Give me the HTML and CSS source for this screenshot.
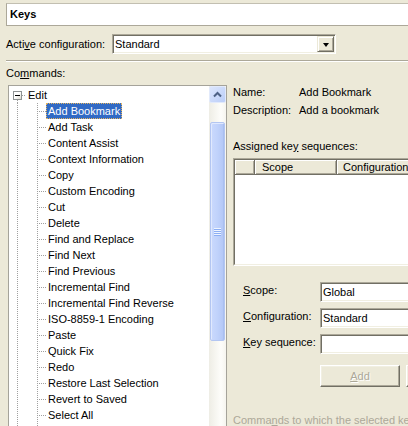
FILE: index.html
```html
<!DOCTYPE html>
<html>
<head>
<meta charset="utf-8">
<link rel="stylesheet" href="styles.css">
</head>
<body>
<div class="page">
  <div class="title">Keys</div>
  <div class="config-row">
    <span class="config-label">Acti<u>v</u>e configuration:</span>
    <div class="sunken combo combo-top">
      <span class="combo-text">Standard</span>
      <span class="drop-btn"><span class="tri"></span></span>
    </div>
  </div>
  <div class="sep"></div>
  <div class="section-label">Co<u>m</u>mands:</div>
  <div class="main">
    <div class="tree">
      <div class="tree-body">
        <div class="row root-row">
          <span class="expander"><span class="minus"></span></span>
          <span class="hline root-hline"></span>
          <span class="label">Edit</span>
        </div>
        <div class="children">
          <div class="row"><span class="hline"></span><span class="label selected">Add Bookmark</span></div>
          <div class="row"><span class="hline"></span><span class="label">Add Task</span></div>
          <div class="row"><span class="hline"></span><span class="label">Content Assist</span></div>
          <div class="row"><span class="hline"></span><span class="label">Context Information</span></div>
          <div class="row"><span class="hline"></span><span class="label">Copy</span></div>
          <div class="row"><span class="hline"></span><span class="label">Custom Encoding</span></div>
          <div class="row"><span class="hline"></span><span class="label">Cut</span></div>
          <div class="row"><span class="hline"></span><span class="label">Delete</span></div>
          <div class="row"><span class="hline"></span><span class="label">Find and Replace</span></div>
          <div class="row"><span class="hline"></span><span class="label">Find Next</span></div>
          <div class="row"><span class="hline"></span><span class="label">Find Previous</span></div>
          <div class="row"><span class="hline"></span><span class="label">Incremental Find</span></div>
          <div class="row"><span class="hline"></span><span class="label">Incremental Find Reverse</span></div>
          <div class="row"><span class="hline"></span><span class="label">ISO-8859-1 Encoding</span></div>
          <div class="row"><span class="hline"></span><span class="label">Paste</span></div>
          <div class="row"><span class="hline"></span><span class="label">Quick Fix</span></div>
          <div class="row"><span class="hline"></span><span class="label">Redo</span></div>
          <div class="row"><span class="hline"></span><span class="label">Restore Last Selection</span></div>
          <div class="row"><span class="hline"></span><span class="label">Revert to Saved</span></div>
          <div class="row"><span class="hline"></span><span class="label">Select All</span></div>
          <div class="row"><span class="hline"></span></div>
        </div>
      </div>
      <div class="vscroll">
        <div class="sb-btn">
          <svg width="15" height="15" viewBox="0 0 15 15"><polyline points="4,9.5 7.5,6 11,9.5" fill="none" stroke="#4D6185" stroke-width="2"/></svg>
        </div>
        <div class="sb-gap"></div>
        <div class="sb-thumb"><span class="grip"></span></div>
      </div>
    </div>
    <div class="details">
      <div class="info">
        <span>Name:</span><span>Add Bookmark</span>
        <span>Description:</span><span>Add a bookmark</span>
      </div>
      <div class="assigned">Assigned ke<u>y</u> sequences:</div>
      <div class="table-outer">
        <div class="table-inner">
          <div class="thead">
            <span class="th th-first"></span>
            <span class="th th-scope">Scope</span>
            <span class="th th-config">Configuration</span>
          </div>
        </div>
      </div>
      <div class="form">
        <span class="form-label"><u>S</u>cope:</span>
        <div class="sunken field"><span class="combo-text">Global</span></div>
        <span class="form-label"><u>C</u>onfiguration:</span>
        <div class="sunken field"><span class="combo-text">Standard</span></div>
        <span class="form-label"><u>K</u>ey sequence:</span>
        <div class="sunken field"></div>
      </div>
      <div class="buttons">
        <span class="btn"><span><u>A</u>dd</span></span>
        <span class="btn"></span>
      </div>
      <div class="bottom-label">Comma<u>n</u>ds to which the selected key sequence is assigned:</div>
    </div>
  </div>
</div>
</body>
</html>
```
FILE: styles.css
```css
* { box-sizing: border-box; }
html, body { margin: 0; padding: 0; }
body {
  background: #ECE9D8;
  font-family: "Liberation Sans", Arial, sans-serif;
  font-size: 11px;
  color: #000;
  width: 408px;
  height: 426px;
  overflow: hidden;
}
.page {
  width: 408px;
  height: 426px;
  overflow: hidden;
  padding-top: 3px;
}
.title {
  margin-left: 6px;
  height: 23px;
  background: #fff;
  border: 1px solid #ACA899;
  border-top-color: #C2BFB1;
  border-right: none;
  font-weight: bold;
  padding-left: 3px;
  line-height: 21px;
}
.config-row {
  display: flex;
  align-items: center;
  margin-top: 8px;
  padding-left: 6px;
  height: 20px;
}
.config-label {
  width: 106px;
  flex: none;
  white-space: nowrap;
}
.sunken {
  border: 1px solid;
  border-color: #ACA899 #FFFFFF #FFFFFF #ACA899;
  box-shadow: inset 1px 1px #716F64, inset -1px -1px #F1EFE2;
  padding: 1px;
  background: #fff;
}
.combo {
  display: flex;
  align-items: center;
}
.combo-top {
  width: 224px;
  height: 20px;
  flex: none;
}
.combo-text {
  flex: 1;
  padding-left: 1px;
  line-height: 16px;
  white-space: nowrap;
}
.drop-btn {
  width: 17px;
  height: 16px;
  flex: none;
  background: #ECE9D8;
  border: 1px solid;
  border-color: #ECE9D8 #716F64 #716F64 #ECE9D8;
  box-shadow: inset 1px 1px #fff, inset -1px -1px #ACA899;
  display: flex;
  align-items: center;
  justify-content: center;
}
.tri {
  width: 1px;
  height: 0;
  border-left: 3px solid transparent;
  border-right: 3px solid transparent;
  border-top: 4px solid #000;
  margin-top: 1px;
}
.sep {
  margin: 6px 0 0 6px;
  height: 2px;
  border-top: 1px solid #ACA899;
  border-bottom: 1px solid #fff;
}
.section-label {
  margin-top: 5px;
  padding-left: 6px;
  line-height: 13px;
}
.main {
  display: flex;
  align-items: flex-start;
  margin-top: 5px;
}
.tree {
  margin-left: 8px;
  width: 219px;
  height: 345px;
  flex: none;
  border: 1px solid #A5A39A;
  background: #fff;
  display: flex;
}
.tree-body {
  width: 200px;
  flex: none;
  overflow: hidden;
  padding-top: 1px;
}
.row {
  display: flex;
  align-items: center;
  height: 16px;
}
.root-row {
  background-image: repeating-linear-gradient(to bottom, #A0A0A0 0 1px, transparent 1px 2px);
  background-size: 1px 3px;
  background-position: 8px 13px;
  background-repeat: no-repeat;
}
.expander {
  width: 9px;
  height: 9px;
  margin-left: 4px;
  flex: none;
  border: 1px solid #8F9394;
  background: linear-gradient(135deg, #fff 45%, #DCD9CC);
  display: flex;
  align-items: center;
  justify-content: center;
}
.minus {
  width: 5px;
  height: 1px;
  background: #000;
}
.hline {
  height: 1px;
  width: 9px;
  margin-left: 28px;
  flex: none;
  background: repeating-linear-gradient(to right, #A0A0A0 0 1px, transparent 1px 2px);
}
.root-hline {
  width: 4px;
  margin-left: 0;
}
.label {
  border: 1px dotted transparent;
  padding: 0 1px;
  line-height: 14px;
  white-space: nowrap;
}
.label.selected {
  background: #316AC5;
  color: #fff;
  border-color: #E4B45E;
}
.children {
  background-image:
    repeating-linear-gradient(to bottom, #A0A0A0 0 1px, transparent 1px 2px),
    repeating-linear-gradient(to bottom, #A0A0A0 0 1px, transparent 1px 2px);
  background-size: 1px 100%, 1px 100%;
  background-position: 8px 0, 28px 0;
  background-repeat: no-repeat;
}
.vscroll {
  width: 17px;
  flex: none;
  display: flex;
  flex-direction: column;
  background: linear-gradient(to right, #EEEDE5, #FDFDFA 70%, #F6F5EF);
}
.sb-btn {
  height: 17px;
  border: 1px solid #E2EAFB;
  border-radius: 2px;
  background: linear-gradient(135deg, #DCE6FD, #BBCEF8);
  display: flex;
  align-items: center;
  justify-content: center;
}
.sb-gap {
  height: 19px;
}
.sb-thumb {
  height: 219px;
  margin: 0 1px 0 1px;
  border: 1px solid #B3C6F2;
  border-radius: 2px;
  background: linear-gradient(to right, #CAD9FD, #C0D2FB 50%, #B2C6F6);
  box-shadow: inset 1px 1px #E0E9FE, inset -1px 0 #A9BFF0;
  display: flex;
  align-items: center;
  justify-content: center;
}
.grip {
  width: 7px;
  height: 8px;
  background: repeating-linear-gradient(to bottom, #EEF4FE 0 1px, #8CAEF4 1px 2px);
}
.details {
  flex: none;
  width: 300px;
  margin-left: 6px;
  padding-top: 1px;
}
.info {
  display: grid;
  grid-template-columns: 66px auto;
  row-gap: 5px;
  line-height: 13px;
}
.assigned {
  margin-top: 23px;
  line-height: 13px;
}
.table-outer {
  margin-top: 5px;
  width: 260px;
  height: 108px;
  border: 1px solid;
  border-color: #ACA899 #fff #fff #ACA899;
}
.table-inner {
  height: 100%;
  border: 1px solid;
  border-color: #716F64 #F1EFE2 #F1EFE2 #716F64;
  background: #fff;
}
.thead {
  display: flex;
  height: 15px;
}
.th {
  height: 15px;
  background: #ECE9D8;
  border-right: 1px solid #716F64;
  border-bottom: 1px solid #716F64;
  box-shadow: inset 1px 1px #fff, inset -1px -1px #ACA899;
  line-height: 14px;
  white-space: nowrap;
  flex: none;
}
.th-first { width: 20px; }
.th-scope { width: 82px; padding-left: 7px; }
.th-config { width: 120px; padding-left: 6px; }
.form {
  margin-top: 16px;
  padding-left: 10px;
  display: grid;
  grid-template-columns: 77px 200px;
  grid-auto-rows: 20px;
  row-gap: 6px;
}
.form-label {
  line-height: 16px;
  white-space: nowrap;
}
.field {
  height: 20px;
  display: flex;
  align-items: center;
}
.buttons {
  display: flex;
  gap: 6px;
  margin-top: 11px;
  padding-left: 87px;
}
.btn {
  width: 80px;
  height: 22px;
  flex: none;
  background: #ECE9D8;
  border: 1px solid;
  border-color: #fff #716F64 #716F64 #fff;
  box-shadow: inset -1px -1px #ACA899, inset 1px 1px #F1EFE2;
  color: #ACA899;
  text-shadow: 1px 1px #fff;
  display: flex;
  align-items: center;
  justify-content: center;
}
.bottom-label {
  margin-top: 27px;
  line-height: 13px;
  color: #ACA899;
  white-space: nowrap;
}
```
